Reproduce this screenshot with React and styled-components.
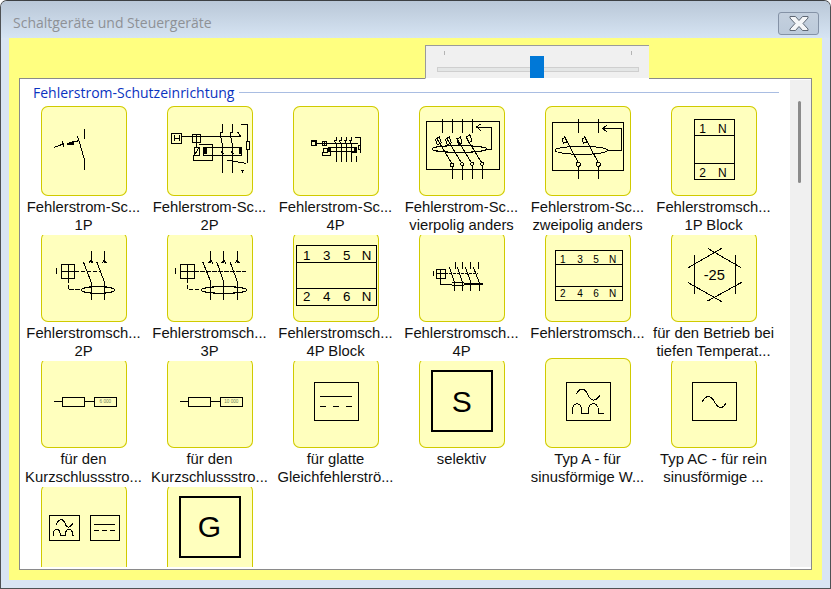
import React from 'react';
import styled, { createGlobalStyle } from 'styled-components';

const GlobalStyle = createGlobalStyle`
  html, body { margin: 0; padding: 0; background: #fff; }
  #root { width: 831px; height: 589px; }
`;

const Window = styled.div`
  width: 831px;
  height: 589px;
  box-sizing: border-box;
  display: flex;
  flex-direction: column;
  border: 1px solid #4e5154;
  border-top-color: #3c3f42;
  border-radius: 7px 7px 0 0;
  background: #d9e5f3;
  overflow: hidden;
`;

const TitleBar = styled.div`
  height: 37px;
  flex: none;
  display: flex;
  align-items: center;
  justify-content: space-between;
  padding: 0 11px 0 12px;
  background: linear-gradient(#b9c7d7, #d6e4f3);
`;

const Title = styled.div`
  font-family: "Open Sans", "Liberation Sans", sans-serif;
  font-size: 14px;
  color: #8e9196;
  margin-top: 6px;
`;

const CloseButton = styled.div`
  width: 41px;
  height: 23px;
  box-sizing: border-box;
  display: flex;
  align-items: center;
  justify-content: center;
  margin-top: 8px;
  border: 1px solid #8492a6;
  border-radius: 3px;
  background: linear-gradient(#c4d0de, #bccada);
`;

const Panel = styled.div`
  flex: 1;
  margin: 0 8px 8px;
  display: flex;
  flex-direction: column;
  padding: 0 10px 10px;
  background: #ffff80;
  min-height: 0;
`;

const TabRow = styled.div`
  height: 40px;
  flex: none;
  display: flex;
  align-items: flex-end;
  padding-left: 406px;
`;

const SliderTab = styled.div`
  width: 224px;
  height: 34px;
  box-sizing: border-box;
  display: flex;
  flex-direction: column;
  padding: 5px 10px 0 11px;
  background: #f0f0f0;
  border-top: 1px solid #9a9a9a;
  border-left: 1px solid #9a9a9a;
  border-bottom: 1px solid #fff;
  margin-bottom: -1px;
  position: relative;
  z-index: 1;
`;

const Ticks = styled.div`
  display: flex;
  justify-content: space-between;
  padding: 0 7px;
`;

const Tick = styled.div`
  width: 1px;
  height: 4px;
  background: #b4b4b4;
`;

const Track = styled.div`
  height: 5px;
  margin-top: 12px;
  box-sizing: border-box;
  background: #e4e6e6;
  border: 1px solid #cfcfcf;
`;

const Thumb = styled.div`
  position: absolute;
  left: 104px;
  bottom: 0;
  width: 14px;
  height: 22px;
  background: #0078d7;
`;

const Content = styled.div`
  flex: 1;
  min-height: 0;
  display: flex;
  border: 1px solid #8a8a8a;
  background: #fff;
  padding-bottom: 2px;
`;

const ScrollArea = styled.div`
  flex: 1;
  min-width: 0;
  overflow: hidden;
`;

const GroupHeader = styled.div`
  height: 27px;
  display: flex;
  align-items: center;
  gap: 5px;
  padding: 0 11px 0 13px;
`;

const GroupTitle = styled.div`
  font-family: "Open Sans", "Liberation Sans", sans-serif;
  font-size: 14px;
  color: #0a33c0;
  white-space: nowrap;
`;

const GroupLine = styled.div`
  flex: 1;
  height: 1px;
  background: #a9bde2;
`;

const Grid = styled.div`
  display: grid;
  grid-template-columns: repeat(6, 126px);
  grid-auto-rows: 126px;
  padding-left: 1px;
`;

const Item = styled.div`
  display: flex;
  flex-direction: column;
  align-items: center;
`;

const Card = styled.div`
  width: 86px;
  height: 90px;
  flex: none;
  border-radius: 7px;
  background: #ffffbe;
  box-shadow: inset 0 0 0 1px #d0ca00;
`;

const Label = styled.div`
  position: relative;
  width: 100%;
  box-sizing: border-box;
  padding: 2px 1px 1px 0;
  background: #fff;
  font-family: "Liberation Sans", Arial, sans-serif;
  font-size: 14.8px;
  line-height: 18px;
  color: #111;
  text-align: center;
  white-space: nowrap;
`;

const Scrollbar = styled.div`
  width: 21px;
  flex: none;
  margin-top: 1px;
  padding: 21px 0 0 8px;
  box-sizing: border-box;
  background: #f0f0f0;
`;

const ScrollThumb = styled.div`
  width: 3px;
  height: 82px;
  border-radius: 2px;
  background: #8b8b8b;
`;

const SymbolSvg = styled.svg`
  display: block;
  width: 86px;
  height: 90px;
  fill: none;
  stroke: #000;
  stroke-width: 3;
  shape-rendering: crispEdges;

  text {
    fill: #000;
    stroke: none;
    font-family: "Liberation Sans", Arial, sans-serif;
    text-anchor: middle;
    dominant-baseline: central;
  }
`;

// the drawings use the coordinates of a 3x view of the dialog
const Sym = ({ x, y, children }) => (
  <SymbolSvg viewBox={`${x} ${y} 258 270`}>{children}</SymbolSvg>
);

const Txt = ({ x, y, s, c, children }) => (
  <text x={x} y={y} fontSize={s} style={c ? { fill: c } : undefined}>{children}</text>
);

const icons = {
  rcd1p: (
    <Sym x={123} y={318}>
      <path d="M162 442L190 432M187 424L192 440M220 426L237 422M232 408L237 424M237 422L254 482M254 388V416M254 480V510" />
      <path d="M200 432L220 424V432Z" fill="#000" />
    </Sym>
  ),
  rcd2p: (
    <Sym x={501} y={318}>
      <rect x={515} y={400} width={30} height={30} />
      <path d="M522 406V424M538 406V424M522 415H538M545 410H722" />
      <rect x={578} y={402} width={24} height={26} />
      <path d="M590 402V428M590 428V442M598 432H638V482H580V465" />
      <rect x={583} y={442} width={15} height={23} />
      <path d="M585 462L596 445" />
      <rect x={610} y={443} width={115} height={22} />
      <path d="M615 445V463M720 445V463" strokeWidth={9} />
      <path d="M667 372V398H660M660 398L668 440M667 440V520M697 372V398H690M690 398L698 440M697 440V520M712 395L724 412" />
      <path d="M663 455L670 462M693 455L700 462M680 480L738 490" />
      <path d="M722 372H743V423M743 448V490" />
      <rect x={738} y={423} width={10} height={25} />
      <path d="M722 512H732M727 512V520" />
    </Sym>
  ),
  rcd4p: (
    <Sym x={24} y={18}>
      <rect x={79} y={123} width={14} height={14} strokeWidth={4} />
      <path d="M93 130H220" />
      <rect x={111} y={123} width={13} height={13} />
      <path d="M117 123V136M111 130H124" />
      <rect x={130} y={143} width={85} height={12} />
      <path d="M134 145V153M211 145V153" strokeWidth={8} />
      <path d="M112 165H135V157M112 165V155M116 145H128V157H116Z" />
      <path d="M154 110V122H148L154 132V186M169 110V122H163L169 132V186M185 110V122H179L185 132V186M200 110V122H194L200 132V186M215 168V186M200 158H215" />
      <path d="M210 112H225V135M225 149V160" />
      <rect x={220} y={135} width={7} height={14} />
    </Sym>
  ),
  rcd4pAlt: (
    <Sym x={27} y={318}>
      <rect x={49} y={364} width={220} height={144} />
      <path d="M97 357V400M127 357V400M157 357V400M187 357V400" />
      <path d="M212 372L200 381L212 392M200 381H245V447H225" />
      <ellipse cx={148} cy={447} rx={82} ry={10} />
      <path d="M80 415L125 490M110 415L155 490M140 415L185 490M170 415L215 488" />
      <path d="M76 418L88 411L94 428L82 434ZM106 418L118 411L124 428L112 434ZM141 418L151 411L156 428L146 434ZM170 410L180 404L186 422L176 428Z" />
      <rect x={121} y={489} width={10} height={10} />
      <circle cx={157} cy={493} r={5} />
      <circle cx={187} cy={491} r={5} />
      <circle cx={217} cy={491} r={5} />
      <path d="M127 499V537M157 498V540M187 496V537M217 496V537" />
    </Sym>
  ),
  rcd2pAlt: (
    <Sym x={405} y={318}>
      <rect x={427} y={367} width={213} height={144} />
      <path d="M506 357V400M566 357V400" />
      <path d="M590 376L578 385L590 395M578 385H634V451H593" />
      <ellipse cx={514} cy={451} rx={79} ry={12} />
      <path d="M462 407L505 488M522 407L565 488" />
      <path d="M456 418L464 412L471 426L460 430ZM516 418L524 412L531 426L520 430Z" />
      <circle cx={505} cy={493} r={6} />
      <circle cx={565} cy={493} r={6} />
      <path d="M505 499V537M565 499V537" />
    </Sym>
  ),
  block1p: (
    <Sym x={783} y={318}>
      <rect x={853} y={358} width={120} height={180} />
      <path d="M853 406H973M853 490H973" />
      <Txt x={878} y={386} s={36}>1</Txt>
      <Txt x={937} y={386} s={36}>N</Txt>
      <Txt x={878} y={518} s={36}>2</Txt>
      <Txt x={937} y={518} s={36}>N</Txt>
    </Sym>
  ),
  sch2p: (
    <Sym x={123} y={6}>
      <path d="M170 115V132M204 104V146M184 125H224M273 64V100M313 64V100M266 100L273 90L280 100M306 100L313 90L320 100M250 95L273 155M290 95L313 155M273 155V210M313 155V210" />
      <rect x={184} y={104} width={40} height={42} />
      <path d="M224 125H300M204 146V178H243" strokeDasharray="14 4" />
      <ellipse cx={294} cy={180} rx={50} ry={10} />
    </Sym>
  ),
  sch3p: (
    <Sym x={501} y={6}>
      <path d="M527 115V132M562 104V146M541 125H583M632 64V100M671 64V100M712 64V100M625 100L632 90L639 100M664 100L671 90L678 100M705 100L712 90L719 100M608 95L632 155M650 95L671 155M690 95L712 155M632 155V210M671 155V210M712 155V210" />
      <rect x={541} y={104} width={42} height={42} />
      <path d="M583 125H738M562 146V178H605" strokeDasharray="14 4" />
      <ellipse cx={672} cy={180} rx={68} ry={10} />
    </Sym>
  ),
  block4p: (
    <Sym x={879} y={6}>
      <rect x={889} y={46} width={241} height={180} />
      <path d="M889 97H1130M889 175H1130" />
      <Txt x={920} y={75} s={40}>1</Txt>
      <Txt x={980} y={75} s={40}>3</Txt>
      <Txt x={1040} y={75} s={40}>5</Txt>
      <Txt x={1100} y={75} s={40}>N</Txt>
      <Txt x={920} y={200} s={40}>2</Txt>
      <Txt x={980} y={200} s={40}>4</Txt>
      <Txt x={1040} y={200} s={40}>6</Txt>
      <Txt x={1100} y={200} s={40}>N</Txt>
    </Sym>
  ),
  sch4p: (
    <Sym x={27} y={6}>
      <path d="M70 122V137M92 118V144M79 130H105M135 95V118M157 95V118M182 95V118M205 95V118M118 112L133 155M142 112L157 155M166 112L182 155M190 112L207 155M133 155V183M157 155V183M182 155V183M207 155V183" />
      <rect x={79} y={118} width={26} height={26} />
      <path d="M105 130H205" strokeDasharray="8 4" />
      <path d="M92 144V162H125M125 157L220 162L125 167" />
    </Sym>
  ),
  block4pSmall: (
    <Sym x={405} y={6}>
      <rect x={436} y={61} width={202} height={151} />
      <path d="M436 102H638M436 169H638" />
      <Txt x={458} y={88} s={30}>1</Txt>
      <Txt x={510} y={88} s={30}>3</Txt>
      <Txt x={558} y={88} s={30}>5</Txt>
      <Txt x={608} y={88} s={30}>N</Txt>
      <Txt x={458} y={190} s={30}>2</Txt>
      <Txt x={510} y={190} s={30}>4</Txt>
      <Txt x={558} y={190} s={30}>6</Txt>
      <Txt x={608} y={190} s={30}>N</Txt>
    </Sym>
  ),
  lowTemp: (
    <Sym x={783} y={6}>
      <path d="M853 76V193M975 76V193M835 113L935 55M893 55L993 113M833 157L935 215M893 213L995 157" />
      <Txt x={913} y={136} s={44}>-25</Txt>
    </Sym>
  ),
  short6: (
    <Sym x={123} y={9}>
      <path d="M162 139H187M254 139H283" />
      <rect x={187} y={127} width={67} height={28} />
      <rect x={283} y={127} width={67} height={28} />
      <Txt x={316} y={138} s={14} c="#6f7f5c">6 000</Txt>
    </Sym>
  ),
  short10: (
    <Sym x={501} y={9}>
      <path d="M540 139H565M632 139H661" />
      <rect x={565} y={127} width={67} height={28} />
      <rect x={661} y={127} width={67} height={28} />
      <Txt x={694} y={138} s={14} c="#6f7f5c">10 000</Txt>
    </Sym>
  ),
  dcBox: (
    <Sym x={879} y={9}>
      <rect x={943} y={82} width={133} height={115} />
      <path d="M960 124H1056" />
      <path d="M960 154H1056" strokeDasharray="18 21" />
    </Sym>
  ),
  selective: (
    <Sym x={27} y={9}>
      <rect x={65} y={47} width={181} height={181} strokeWidth={6} />
      <Txt x={155} y={138} s={90}>S</Txt>
    </Sym>
  ),
  typeA: (
    <Sym x={405} y={9}>
      <rect x={469} y={82} width={133} height={115} />
      <path d="M498 118C510 95 525 100 533 118S555 145 570 120" />
      <path d="M487 176V165C487 140 515 140 515 165V176H535V165C535 140 565 140 565 165V176H582" />
    </Sym>
  ),
  typeAC: (
    <Sym x={783} y={9}>
      <rect x={847} y={82} width={133} height={115} />
      <path d="M877 140C890 115 905 125 913 140S935 170 948 143" />
    </Sym>
  ),
  typeB: (
    <Sym x={123} y={387}>
      <rect x={148} y={481} width={91} height={76} />
      <path d="M168 510C175 490 190 490 195 505S210 520 218 505" />
      <path d="M160 542V535C160 520 180 520 180 535V542H197V535C197 520 217 520 217 535V542H222" />
      <rect x={271} y={481} width={88} height={76} />
      <path d="M282 508H345" />
      <path d="M282 526H345" strokeDasharray="14 10" />
    </Sym>
  ),
  general: (
    <Sym x={501} y={387}>
      <rect x={539} y={425} width={182} height={182} strokeWidth={6} />
      <Txt x={628} y={515} s={90}>G</Txt>
    </Sym>
  ),
};

const items = [
  ['rcd1p', 'Fehlerstrom-Sc...', '1P'],
  ['rcd2p', 'Fehlerstrom-Sc...', '2P'],
  ['rcd4p', 'Fehlerstrom-Sc...', '4P'],
  ['rcd4pAlt', 'Fehlerstrom-Sc...', 'vierpolig anders'],
  ['rcd2pAlt', 'Fehlerstrom-Sc...', 'zweipolig anders'],
  ['block1p', 'Fehlerstromsch...', '1P Block'],
  ['sch2p', 'Fehlerstromsch...', '2P'],
  ['sch3p', 'Fehlerstromsch...', '3P'],
  ['block4p', 'Fehlerstromsch...', '4P Block'],
  ['sch4p', 'Fehlerstromsch...', '4P'],
  ['block4pSmall', 'Fehlerstromsch...'],
  ['lowTemp', 'für den Betrieb bei', 'tiefen Temperat...'],
  ['short6', 'für den', 'Kurzschlussstro...'],
  ['short10', 'für den', 'Kurzschlussstro...'],
  ['dcBox', 'für glatte', 'Gleichfehlerströ...'],
  ['selective', 'selektiv'],
  ['typeA', 'Typ A - für', 'sinusförmige W...'],
  ['typeAC', 'Typ AC - für rein', 'sinusförmige ...'],
  ['typeB', ''],
  ['general', ''],
];

const CloseIcon = () => (
  <svg width="20" height="17" viewBox="0 0 20 17">
    <path
      d="M1 1.5H6.5L10 5.5L13.5 1.5H19V3L14 8.5L19 14V15.5H13.5L10 11.5L6.5 15.5H1V14L6 8.5L1 3Z"
      fill="#f4f6f8"
      stroke="#5f6875"
      strokeWidth="1"
    />
  </svg>
);

const App = () => (
  <Window>
    <GlobalStyle />
    <TitleBar>
      <Title>Schaltgeräte und Steuergeräte</Title>
      <CloseButton><CloseIcon /></CloseButton>
    </TitleBar>
    <Panel>
      <TabRow>
        <SliderTab>
          <Ticks><Tick /><Tick /></Ticks>
          <Track />
          <Thumb />
        </SliderTab>
      </TabRow>
      <Content>
        <ScrollArea>
          <GroupHeader>
            <GroupTitle>Fehlerstrom-Schutzeinrichtung</GroupTitle>
            <GroupLine />
          </GroupHeader>
          <Grid>
            {items.map(([icon, first, second]) => (
              <Item key={icon}>
                <Card>{icons[icon]}</Card>
                <Label>{first}{second && <br />}{second}</Label>
              </Item>
            ))}
          </Grid>
        </ScrollArea>
        <Scrollbar><ScrollThumb /></Scrollbar>
      </Content>
    </Panel>
  </Window>
);

export default App;
